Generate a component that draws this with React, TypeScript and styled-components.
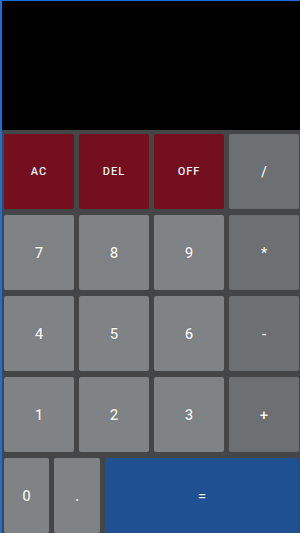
import React from 'react';
import styled, { createGlobalStyle } from 'styled-components';

const GlobalStyle = createGlobalStyle`
  html, body {
    margin: 0;
    padding: 0;
    background: #000;
  }
  * {
    box-sizing: border-box;
  }
`;

const Frame = styled.div`
  width: 300px;
  height: 533px;
  display: flex;
  flex-direction: column;
  border-top: 1px solid #1c6fd8;
  border-left: 2px solid #1c6fd8;
  font-family: Roboto, 'Noto Sans', sans-serif;
  overflow: hidden;
`;

const Display = styled.div`
  height: 129px;
  background: #000;
  flex-shrink: 0;
`;

const Keypad = styled.div`
  flex: 1;
  background: #444546;
  padding: 4px 1px 0 2px;
  display: flex;
  flex-direction: column;
  gap: 6px;
`;

const Row = styled.div<{ $cols: string }>`
  height: 75px;
  display: grid;
  grid-template-columns: ${p => p.$cols};
  column-gap: 5px;
`;

type Kind = 'danger' | 'digit' | 'op' | 'equals';

const colors: Record<Kind, string> = {
  danger: '#740f20',
  digit: '#808385',
  op: '#6c7073',
  equals: '#1f5092',
};

const Key = styled.button<{ $kind: Kind; $small?: boolean }>`
  border: none;
  margin: 0;
  padding: 0;
  border-radius: 2px;
  background: ${p => colors[p.$kind]};
  color: #f4f4f4;
  font-family: Roboto, 'Noto Sans', sans-serif;
  font-size: ${p => (p.$small ? '11px' : '15px')};
  font-weight: 500;
  letter-spacing: ${p => (p.$small ? '1px' : '0')};
  text-shadow: 0 0 1px rgba(0, 0, 0, 0.5);
  display: flex;
  align-items: center;
  justify-content: center;
  cursor: pointer;
`;

const grid4 = 'repeat(4, 1fr)';

function App() {
  const numRows = [
    ['7', '8', '9', '*'],
    ['4', '5', '6', '-'],
    ['1', '2', '3', '+'],
  ];

  return (
    <>
      <GlobalStyle />
      <Frame>
        <Display />
        <Keypad>
          <Row $cols={grid4}>
            <Key $kind="danger" $small>AC</Key>
            <Key $kind="danger" $small>DEL</Key>
            <Key $kind="danger" $small>OFF</Key>
            <Key $kind="op">/</Key>
          </Row>
          {numRows.map(r => (
            <Row $cols={grid4} key={r.join('')}>
              {r.map((k, i) => (
                <Key key={k} $kind={i === 3 ? 'op' : 'digit'}>
                  {k}
                </Key>
              ))}
            </Row>
          ))}
          <Row $cols="45px 46px 1fr">
            <Key $kind="digit">0</Key>
            <Key $kind="digit">.</Key>
            <Key $kind="equals">=</Key>
          </Row>
        </Keypad>
      </Frame>
    </>
  );
}

export default App;
